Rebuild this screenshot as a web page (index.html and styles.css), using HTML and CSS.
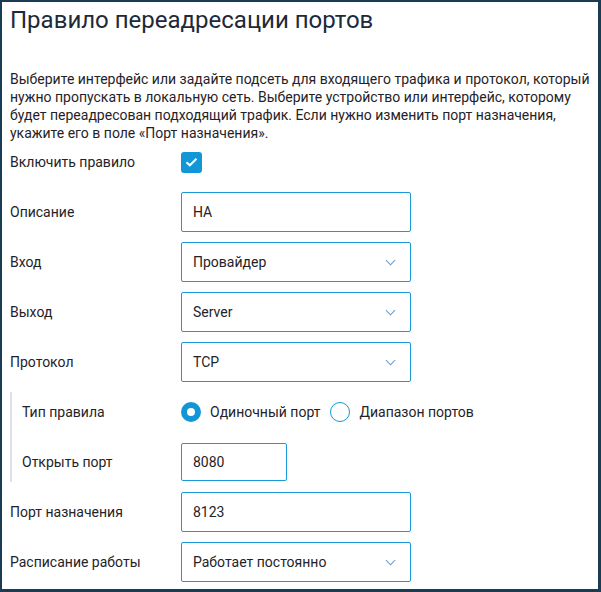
FILE: index.html
```html
<!DOCTYPE html>
<html lang="ru">
<head>
    <meta charset="UTF-8">
    <title>Правило переадресации портов</title>
    <link rel="stylesheet" href="styles.css">
</head>
<body>

    <div class="frame">
        <h1 class="title">Правило переадресации портов</h1>

        <p class="intro">Выберите интерфейс или задайте подсеть для входящего трафика и протокол, который нужно пропускать в локальную сеть. Выберите устройство или интерфейс, которому будет переадресован подходящий трафик. Если нужно изменить порт назначения, укажите его в поле «Порт назначения».</p>

        <div class="form">
            <div class="row">
                <div class="label">Включить правило</div>
                <span class="checkbox">
                    <svg width="13" height="10" viewBox="0 0 13 10"><path d="M1.5 5.2 L4.8 8.3 L11.5 1.7" fill="none" stroke="#fff" stroke-width="2"/></svg>
                </span>
            </div>

            <div class="row">
                <div class="label">Описание</div>
                <div class="field">НА</div>
            </div>

            <div class="row">
                <div class="label">Вход</div>
                <div class="field select">Провайдер<span class="chevron"></span></div>
            </div>

            <div class="row">
                <div class="label">Выход</div>
                <div class="field select">Server<span class="chevron"></span></div>
            </div>

            <div class="row">
                <div class="label">Протокол</div>
                <div class="field select">TCP<span class="chevron"></span></div>
            </div>

            <div class="group">
                <div class="row">
                    <div class="label">Тип правила</div>
                    <div class="radios">
                        <span class="radio checked"></span>
                        <span class="radio-text">Одиночный порт</span>
                        <span class="radio"></span>
                        <span class="radio-text">Диапазон портов</span>
                    </div>
                </div>
                <div class="row">
                    <div class="label">Открыть порт</div>
                    <div class="field short">8080</div>
                </div>
            </div>

            <div class="row">
                <div class="label">Порт назначения</div>
                <div class="field">8123</div>
            </div>

            <div class="row">
                <div class="label">Расписание работы</div>
                <div class="field select">Работает постоянно<span class="chevron"></span></div>
            </div>
        </div>
    </div>

</body>
</html>
```

FILE: styles.css
```css
body {
    margin: 0;
    font-family: Roboto, "Liberation Sans", sans-serif;
    color: #1f2328;
    background-color: #ffffff;
}

.frame {
    box-sizing: border-box;
    width: 601px;
    height: 592px;
    border: 2px solid #183c54;
    border-bottom-width: 3px;
    border-right-width: 3px;
    padding: 0 8px;
    overflow: hidden;
}

.title {
    margin: 2px 0 0;
    font-size: 24px;
    line-height: 32px;
    font-weight: 400;
    color: #1c2a3a;
}

.intro {
    margin: 34px 0 0;
    font-size: 14px;
    line-height: 18px;
}

.form {
    margin-top: 0;
    display: flex;
    flex-direction: column;
    gap: 10px;
}

.row {
    display: flex;
    align-items: center;
    height: 40px;
    font-size: 14px;
}

.label {
    width: 171px;
    flex-shrink: 0;
}

.checkbox {
    width: 21px;
    height: 21px;
    border-radius: 3px;
    background-color: #1296d8;
    display: flex;
    align-items: center;
    justify-content: center;
}

.field {
    box-sizing: border-box;
    width: 230px;
    height: 40px;
    border: 1px solid #1a9ad8;
    border-radius: 2px;
    padding: 0 11px;
    display: flex;
    align-items: center;
    position: relative;
}

.field.short {
    width: 106px;
    height: 38px;
}

.chevron {
    position: absolute;
    right: 16px;
    top: 14px;
    width: 6px;
    height: 6px;
    border-right: 1.5px solid #6f9cc9;
    border-bottom: 1.5px solid #6f9cc9;
    transform: rotate(45deg);
}

.group {
    display: flex;
    flex-direction: column;
    gap: 10px;
    border-left: 2px solid #dde1e8;
    padding-left: 10px;
}

.group .label {
    width: 159px;
}

.radios {
    display: flex;
    align-items: center;
}

.radio {
    box-sizing: border-box;
    width: 20px;
    height: 20px;
    border-radius: 50%;
    border: 1.5px solid #1296d8;
}

.radio.checked {
    border: 6px solid #1296d8;
}

.radio-text {
    margin: 0 10px 0 9px;
}
```
